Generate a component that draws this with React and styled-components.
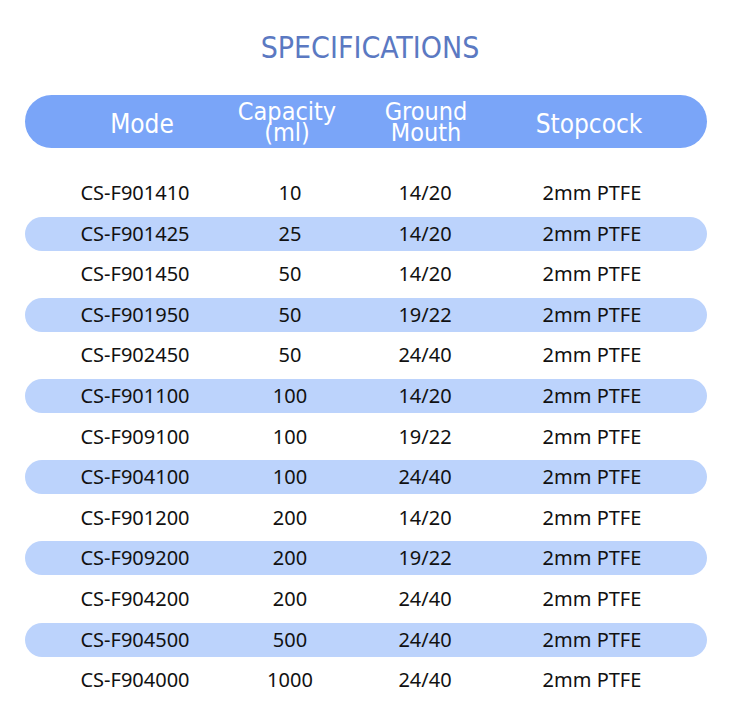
import React from 'react';
import styled, { createGlobalStyle } from 'styled-components';

const GlobalStyle = createGlobalStyle`
  html, body { margin: 0; padding: 0; background: #ffffff; }
  body { font-family: "Noto Sans", "Open Sans", sans-serif; }
`;

const rows = [
  ['CS-F901410', '10', '14/20'],
  ['CS-F901425', '25', '14/20'],
  ['CS-F901450', '50', '14/20'],
  ['CS-F901950', '50', '19/22'],
  ['CS-F902450', '50', '24/40'],
  ['CS-F901100', '100', '14/20'],
  ['CS-F909100', '100', '19/22'],
  ['CS-F904100', '100', '24/40'],
  ['CS-F901200', '200', '14/20'],
  ['CS-F909200', '200', '19/22'],
  ['CS-F904200', '200', '24/40'],
  ['CS-F904500', '500', '24/40'],
  ['CS-F904000', '1000', '24/40'],
];

export default function App() {
  return <Page>
    <GlobalStyle />
    <Title>SPECIFICATIONS</Title>
    <Table>
      <Header>
        <HeadCell>Mode</HeadCell>
        <HeadCell $tight>Capacity<br />(ml)</HeadCell>
        <HeadCell $tight>Ground<br />Mouth</HeadCell>
        <HeadCell>Stopcock</HeadCell>
      </Header>
      <Body>
        {rows.map((r, i) => (
          <Row key={r[0]} $striped={i % 2 === 1}>
            <Cell>{r[0]}</Cell>
            <Cell>{r[1]}</Cell>
            <Cell>{r[2]}</Cell>
            <Cell>2mm PTFE</Cell>
          </Row>
        ))}
      </Body>
    </Table>
  </Page>
};

const Page = styled.div`
  width: 740px;
  height: 717px;
  overflow: hidden;
  display: flex;
  flex-direction: column;
`

const Title = styled.h1`
  align-self: center;
  margin: 30px 0 0;
  height: 36px;
  font-family: "DejaVu Sans", sans-serif;
  font-stretch: condensed;
  font-weight: normal;
  font-size: 30px;
  line-height: 36px;
  color: #5b79c2;
`

const Table = styled.div`
  margin: 29px 0 0 25px;
  width: 682px;
  display: flex;
  flex-direction: column;
`

const Header = styled.div`
  display: grid;
  grid-template-columns: 234px 56px 222px 104px;
  align-items: center;
  height: 53px;
  border-radius: 27px;
  background: #7aa5f8;
`

const HeadCell = styled.div`
  display: flex;
  justify-content: center;
  text-align: center;
  white-space: nowrap;
  color: #ffffff;
  font-family: "DejaVu Sans", sans-serif;
  font-stretch: condensed;
  font-size: ${p => p.$tight ? '25px' : '26px'};
  line-height: ${p => p.$tight ? '21px' : '28px'};
  margin-top: ${p => p.$tight ? '0px' : '4px'};
`

const Body = styled.div`
  margin-top: 28px;
  display: flex;
  flex-direction: column;
  gap: 6.6px;
`

const Row = styled.div`
  display: grid;
  grid-template-columns: 220px 90px 180px 154px;
  align-items: center;
  height: 34px;
  border-radius: 17px;
  background: ${p => p.$striped ? '#bcd3fc' : 'transparent'};
`

const Cell = styled.div`
  display: flex;
  justify-content: center;
  white-space: nowrap;
  color: #111111;
  font-size: 20px;
  line-height: 34px;
`
